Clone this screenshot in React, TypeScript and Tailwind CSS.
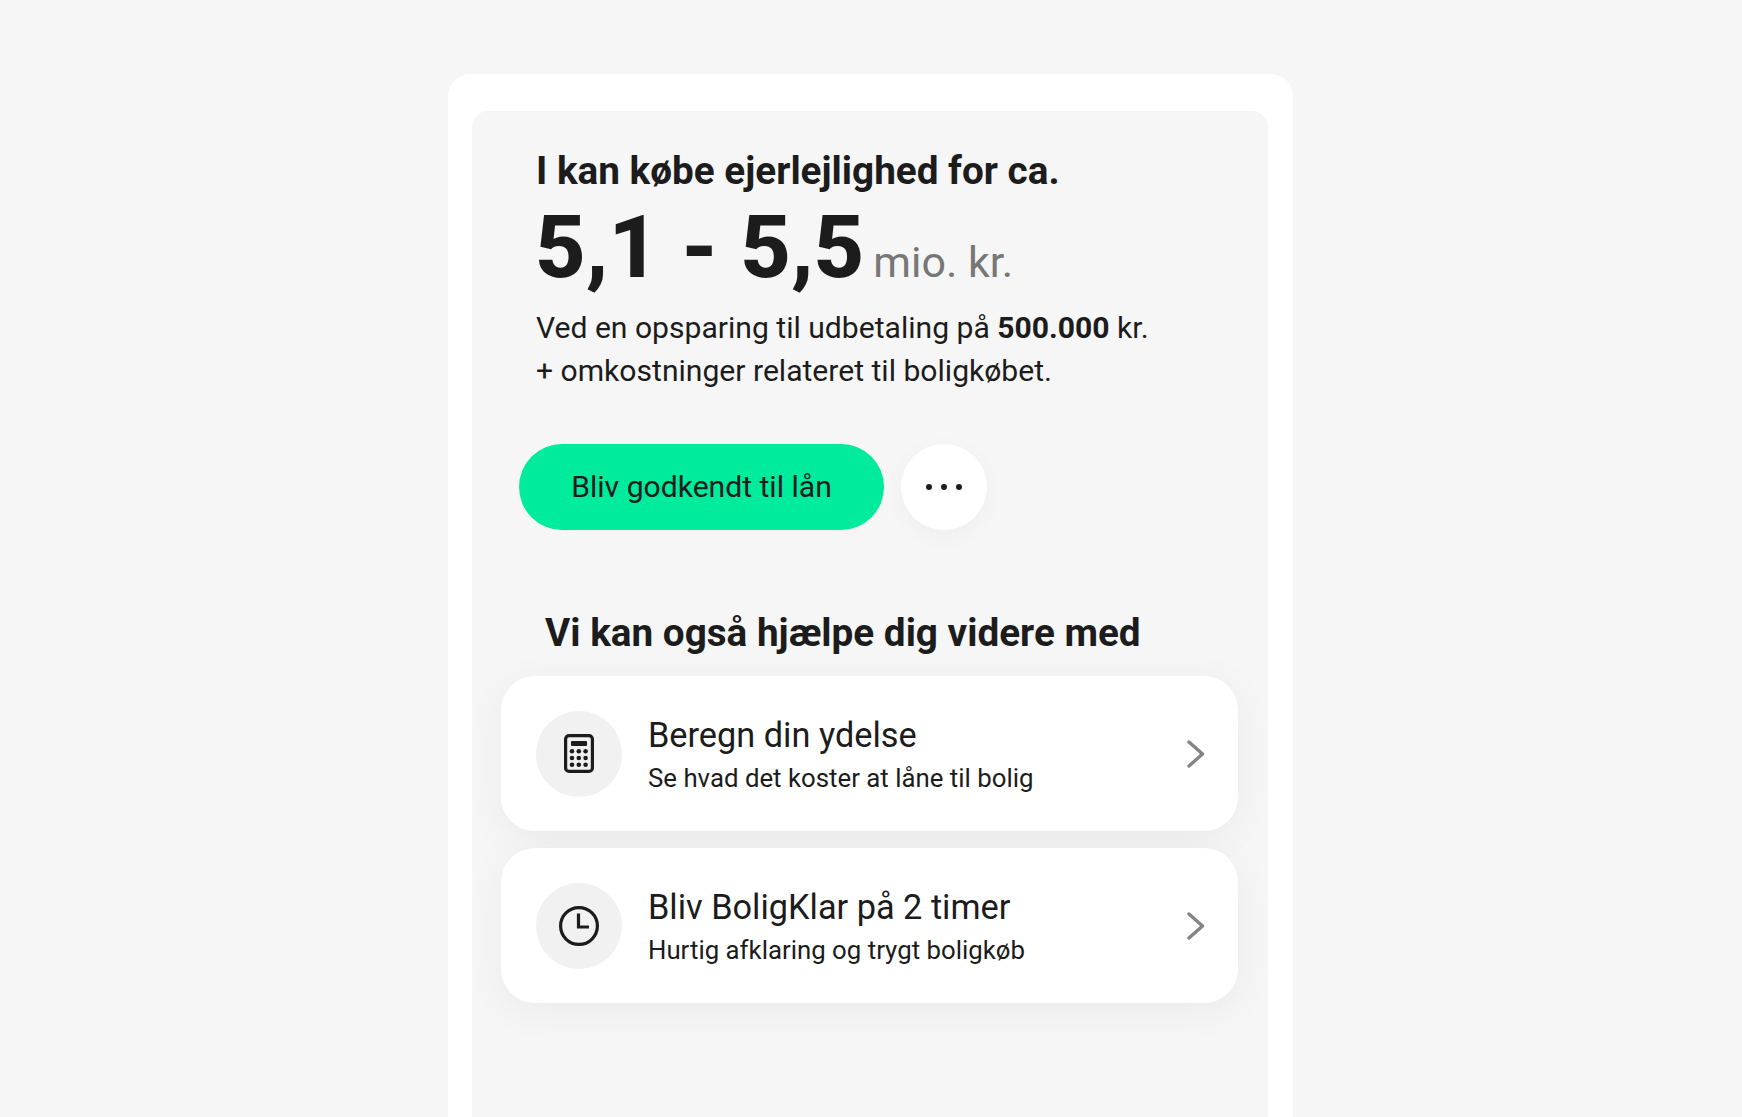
const rows = [
  { title: 'Beregn din ydelse', sub: 'Se hvad det koster at låne til bolig', icon: 'calc' },
  { title: 'Bliv BoligKlar på 2 timer', sub: 'Hurtig afklaring og trygt boligkøb', icon: 'clock' },
];

const CalcIcon = () => (
  <svg width="30" height="39" viewBox="0 0 30 39" fill="none">
    <rect x="1.6" y="1.6" width="26.8" height="35.8" rx="3.5" stroke="#1c1c1c" strokeWidth="3.2" />
    <rect x="7" y="7" width="16" height="5" rx="1" fill="#1c1c1c" />
    {[17.3, 24, 30.8].map((y) =>
      [8, 14.8, 21.6].map((x) => <circle key={`${x}-${y}`} cx={x} cy={y} r="2.3" fill="#1c1c1c" />),
    )}
  </svg>
);

const ClockIcon = () => (
  <svg width="42" height="42" viewBox="0 0 42 42" fill="none">
    <circle cx="21" cy="21" r="18.4" stroke="#1c1c1c" strokeWidth="3.2" />
    <path d="M20.5 8.5V22H31" stroke="#1c1c1c" strokeWidth="3.2" />
  </svg>
);

export default function App() {
  return (
    <div className="h-[1117px] overflow-hidden bg-[#f6f6f6] pt-[74px] font-['Roboto',sans-serif] text-[#1c1c1c]">
      <div className="ml-[448px] h-[1100px] w-[845px] rounded-t-[22px] bg-white px-6 pt-[37px]">
        <div className="h-[1100px] w-[796px] rounded-t-[16px] bg-[#f6f6f6] pt-[28px]">
          <h2 className="ml-16 text-[38.7px] leading-[64px] font-bold">I kan købe ejerlejlighed for ca.</h2>
          <div className="ml-16 flex items-baseline gap-[9px] leading-[87px]">
            <span className="-ml-px text-[88px] font-extrabold">5,1 - 5,5</span>
            <span className="text-[43px] text-[#777777]">mio. kr.</span>
          </div>
          <p className="ml-16 text-[30.1px] leading-[43px]">
            Ved en opsparing til udbetaling på <b>500.000</b> kr.
            <br />+ omkostninger relateret til boligkøbet.
          </p>
          <div className="ml-[47px] mt-[52px] flex gap-[17px]">
            <button className="h-[86px] w-[365px] rounded-full bg-[#00eb9b] text-[30.1px]">Bliv godkendt til lån</button>
            <button className="flex h-[86px] w-[86px] items-center justify-center gap-[9px] rounded-full bg-white shadow-[0_6px_24px_rgba(0,0,0,0.03)]">
              <span className="size-[6px] rounded-full bg-[#1c1c1c]" />
              <span className="size-[6px] rounded-full bg-[#1c1c1c]" />
              <span className="size-[6px] rounded-full bg-[#1c1c1c]" />
            </button>
          </div>
          <h3 className="ml-[73px] mt-[78px] text-[38.7px] leading-[50px] font-bold">Vi kan også hjælpe dig videre med</h3>
          <div className="ml-[29px] mt-[18px] flex w-[737px] flex-col gap-[17px]">
            {rows.map((r) => (
              <div
                key={r.title}
                className="flex h-[155px] items-center rounded-[34px] bg-white pl-[35px] pr-[33px] shadow-[0_8px_40px_rgba(0,0,0,0.05)]"
              >
                <div className="flex size-[86px] items-center justify-center rounded-full bg-[#f1f1f1]">
                  {r.icon === 'calc' ? <CalcIcon /> : <ClockIcon />}
                </div>
                <div className="ml-[26px] flex-1 pt-[2px]">
                  <div className="text-[34.3px] leading-[44px]">{r.title}</div>
                  <div className="mt-[3px] text-[25.8px] leading-[36px]">{r.sub}</div>
                </div>
                <svg width="18" height="28" viewBox="0 0 18 28" fill="none">
                  <path d="M2 2L15.5 14L2 26" stroke="#848484" strokeWidth="3.4" strokeLinecap="round" strokeLinejoin="round" />
                </svg>
              </div>
            ))}
          </div>
        </div>
      </div>
    </div>
  );
}
